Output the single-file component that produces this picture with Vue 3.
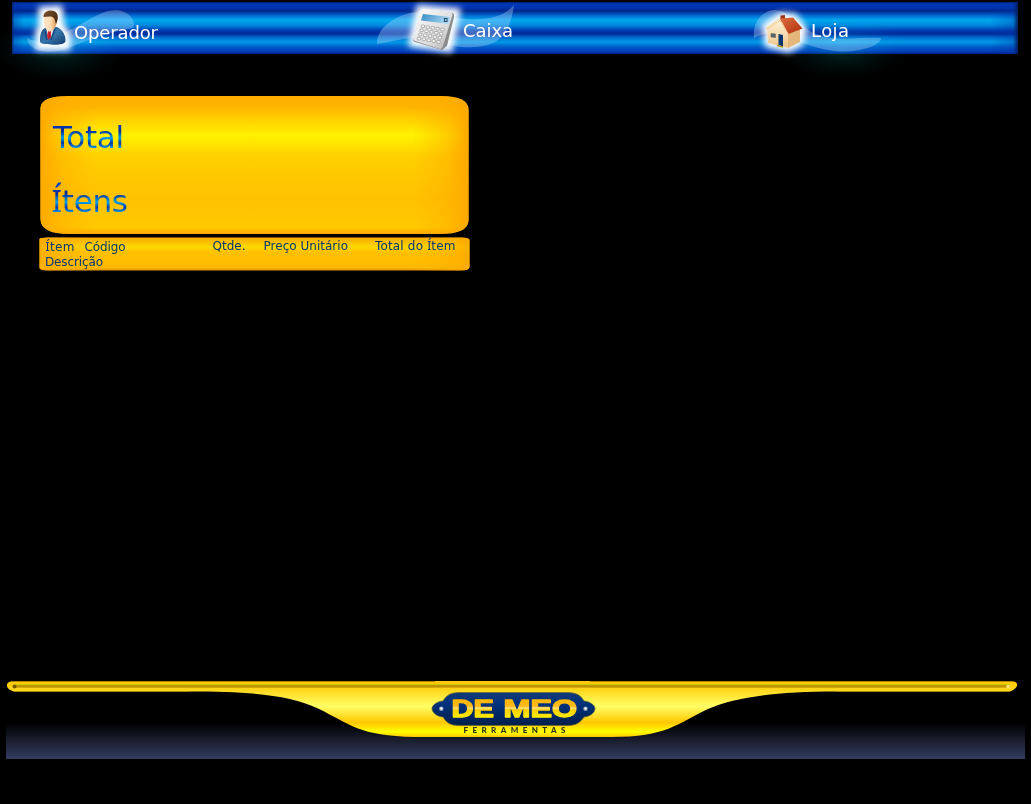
<script setup>
const keys = []
for (let r = 0; r < 4; r++) {
  for (let c = 0; c < 5; c++) {
    keys.push({ x: 421.3 + c * 4.9 - r * 1.3, y: 25 + r * 4.1 + c * 0.8 })
  }
}
</script>

<template>
  <main class="screen">
    <header class="topbar">
      <svg class="station" width="344" height="84" viewBox="0 0 344 84">
        <defs>
          <filter id="glow" x="-50%" y="-50%" width="200%" height="200%"><feGaussianBlur stdDeviation="3" /></filter>
          <radialGradient id="halo"><stop offset="0" stop-color="#007868" stop-opacity=".36" /><stop offset="1" stop-color="#003b35" stop-opacity="0" /></radialGradient>
          <linearGradient id="suit" x1="0" y1="0" x2="1" y2="1"><stop offset="0" stop-color="#1f5284" /><stop offset=".5" stop-color="#3474ab" /><stop offset="1" stop-color="#123b68" /></linearGradient>
          <linearGradient id="skin" x1="0" x2="1"><stop offset="0" stop-color="#ffe6c8" /><stop offset=".5" stop-color="#ffdcb4" /><stop offset="1" stop-color="#d99253" /></linearGradient>
          <linearGradient id="hair" x1="0" y1="0" x2="1" y2="1"><stop offset="0" stop-color="#80552c" /><stop offset="1" stop-color="#34200e" /></linearGradient>
        </defs>
        <ellipse cx="60" cy="48" rx="68" ry="34" fill="url(#halo)" class="under" />
        <path class="swoosh" d="M27 38C40 46 60 35 76 27C94 17 105 9 119 10.500C129 12 137 21 133 28C112 31 86 41 68 48C50 55 28 52 27 38Z" />
        <path d="M43 11L58 10L60 28L66 34L66 46L40 46L40 32L43 28Z" fill="#fff" stroke="#fff" stroke-width="9" filter="url(#glow)" />
        <path d="M40 42C40 34 41 29 47 27L57 27C62 29 66 35 65.500 41C65 45 56 45 51 44.500C46 44 42 44.500 40 42Z" fill="url(#suit)" />
        <path d="M46.500 29L54 28L51 37L48 39Z" fill="#e9edf2" />
        <path d="M48 31L51 31L51 37L48.500 40L47 36Z" fill="#c92330" />
        <path d="M45 31L47 40M55 29L51 40" stroke="#123d69" stroke-width="1" fill="none" />
        <path d="M44 18C45 13 48 12 52 13C56 14 57.500 19 56.500 24C55 29 51 33 48 31C45 29 43.500 24 44 18Z" fill="url(#skin)" />
        <path d="M43.500 17C43.500 13 46 11 50 10.500C56 10 59 14 57.500 20L56 24L54.500 19C52 15 48 17 43.500 17Z" fill="url(#hair)" />
        <text x="74" y="39" textLength="84" class="bar-label">Operador</text>
      </svg>
      <svg class="station" width="343" height="84" viewBox="344 0 343 84">
        <defs>
          <linearGradient id="case" x1="0" y1="0" x2="1" y2="1"><stop offset="0" stop-color="#fff" /><stop offset=".65" stop-color="#dadada" /><stop offset="1" stop-color="#aaa" /></linearGradient>
          <linearGradient id="display" x1="0" y1="0" x2="1" y2=".3"><stop offset="0" stop-color="#358bc6" /><stop offset="1" stop-color="#a9d5f0" /></linearGradient>
        </defs>
        <path class="swoosh" d="M377 44C376 32 389 18 410 13C435 10 448 18 468 19C488 20 504 17 514 5C512 22 506 37 493 43C474 51 449 47 432 39C410 35 394 42 377 44Z" />
        <path d="M421 10L455 13L448 47L414 42Z" fill="#fff" stroke="#fff" stroke-width="10" filter="url(#glow)" />
        <path d="M423 10L453 13Q454.500 14 454 17L447 46L442 50L415 42Q412.500 41 413.500 39L421 12Z" fill="#8b8b8b" />
        <path d="M423 9L451 12.500Q453 13 452.500 15L443 46Q442 49.500 440 49L415 41Q413 40 413.500 38L421 11Z" fill="url(#case)" />
        <path d="M423 14L450.500 17L448.500 24L421 20.500Z" fill="url(#display)" />
        <rect x="444.500" y="18.500" width="2.500" height="3" fill="none" stroke="#234760" />
        <g fill="#fff" stroke="#999" stroke-width=".8">
          <rect v-for="(k, i) in keys" :key="i" :x="k.x" :y="k.y" width="3.200" height="2.600" rx=".3" />
        </g>
        <text x="463" y="37" textLength="50" class="bar-label">Caixa</text>
      </svg>
      <svg class="station" width="344" height="84" viewBox="687 0 344 84">
        <defs>
          <linearGradient id="roof" x1="0" y1="0" x2="1" y2="1"><stop offset="0" stop-color="#df6d3f" /><stop offset="1" stop-color="#ad2e0c" /></linearGradient>
          <linearGradient id="wall" x1="0" y1="0" x2="0" y2="1"><stop offset="0" stop-color="#fff3d8" /><stop offset="1" stop-color="#ebc58c" /></linearGradient>
        </defs>
        <ellipse cx="842" cy="48" rx="66" ry="32" fill="url(#halo)" class="under" />
        <path class="swoosh" d="M754 38C752 22 763 10 775 10C793 11 804 32 821 36C840 41 860 37 881 38C881 46 859 52 840 51.500C819 50 801 43 786 36C774 31 764 33 754 38Z" />
        <path d="M766 26L781 16L794 17L803 29L800 43L788 49L768 44Z" fill="#fff" stroke="#fff" stroke-width="7" filter="url(#glow)" />
        <path d="M780.500 15.500L785 15L785 21L780.500 22Z" fill="#9b3319" />
        <path d="M767 28L780 19L788 32L788 48L768 43Z" fill="url(#wall)" />
        <path d="M788 32L800 29L800 42L788 48Z" fill="#e4b67c" />
        <path d="M780 18.500L793 17.500L802.500 28.500L788.500 34Z" fill="url(#roof)" />
        <path d="M780 18.500L766 28.500L767 29.500L780 20.500L788 34" fill="none" stroke="#f2cc98" stroke-width="1" />
        <path d="M778.500 34L783 35L783 46.500L778.500 45Z" fill="#083771" />
        <path d="M771 33.500L775.500 34L775.500 37.500L771 37Z" fill="#4d6577" stroke="#7e6b50" stroke-width=".7" />
        <path d="M777 45.500L783 47" stroke="#a99719" stroke-width="1.500" />
        <text x="811" y="37" textLength="38" class="bar-label">Loja</text>
      </svg>
    </header>

    <section class="summary">
      <svg width="429" height="139" viewBox="40 96 429 139">
        <defs>
          <linearGradient id="gold" x1="0" y1="0" x2="0" y2="1">
            <stop offset="0" stop-color="#ffae00" /><stop offset=".08" stop-color="#ffb400" /><stop offset=".285" stop-color="#fff200" /><stop offset=".44" stop-color="#ffd000" /><stop offset=".74" stop-color="#ffc100" /><stop offset=".95" stop-color="#ffca00" /><stop offset="1" stop-color="#ffa800" />
          </linearGradient>
          <linearGradient id="shade" x1="0" x2="1">
            <stop offset="0" stop-color="#ffa900" /><stop offset=".05" stop-color="#ffac00" stop-opacity=".5" /><stop offset=".13" stop-color="#ffb000" stop-opacity="0" /><stop offset=".87" stop-color="#ffb000" stop-opacity="0" /><stop offset=".95" stop-color="#ffac00" stop-opacity=".5" /><stop offset="1" stop-color="#ffa800" />
          </linearGradient>
          <linearGradient id="inkTotal" gradientUnits="userSpaceOnUse" x1="0" y1="125" x2="0" y2="149"><stop offset="0" stop-color="#0037bd" /><stop offset=".25" stop-color="#002ca0" /><stop offset=".54" stop-color="#00a0e8" /><stop offset=".75" stop-color="#0635a5" /><stop offset="1" stop-color="#00aaf3" /></linearGradient>
          <linearGradient id="inkItems" gradientUnits="userSpaceOnUse" x1="0" y1="182" x2="0" y2="213"><stop offset="0" stop-color="#004ad2" /><stop offset=".38" stop-color="#002b98" /><stop offset=".65" stop-color="#00a4ec" /><stop offset=".82" stop-color="#0638a9" /><stop offset="1" stop-color="#00a4f0" /></linearGradient>
          <path id="plate" d="M40.500 108Q41 96 68 96L441 96Q468.500 96 468.500 110L468.500 220Q468.500 234 439 234L69 234Q41 234 40.500 219Z" />
        </defs>
        <use href="#plate" fill="url(#gold)" />
        <use href="#plate" fill="url(#shade)" />
        <text x="53" y="148" textLength="71" class="headline" fill="url(#inkTotal)">Total</text>
        <text x="51.500" y="212" textLength="76.500" class="headline" fill="url(#inkItems)"><tspan class="serif-cap">Í</tspan>tens</text>
      </svg>
    </section>

    <section class="columns">
      <svg width="431" height="34" viewBox="39 237 431 34">
        <defs>
          <linearGradient id="strip" x1="0" y1="0" x2="0" y2="1"><stop offset="0" stop-color="#f7a900" /><stop offset=".29" stop-color="#ffd800" /><stop offset=".45" stop-color="#ffc000" /><stop offset=".92" stop-color="#ffb900" /><stop offset="1" stop-color="#d99000" /></linearGradient>
          <path id="stripShape" d="M39.500 239Q40 237.500 48 237.500L461 237.500Q469.500 237.500 469.500 240L469.500 267Q469.500 270.500 460 270.500L48 270.500Q40 270.500 39.500 268Z" />
        </defs>
        <use href="#stripShape" fill="url(#strip)" />
        <use href="#stripShape" fill="url(#shade)" opacity=".8" />
        <g class="column-label">
          <text x="45.500" y="251" textLength="29"><tspan class="serif-cap">Í</tspan>tem</text>
          <text x="84.500" y="251" textLength="41">Código</text>
          <text x="45" y="266" textLength="58">Descrição</text>
          <text x="212.500" y="250" textLength="33">Qtde.</text>
          <text x="263.500" y="250" textLength="84.500">Preço Unitário</text>
          <text x="375" y="250" textLength="80.500">Total do <tspan class="serif-cap">Í</tspan>tem</text>
        </g>
      </svg>
    </section>

    <footer class="brand">
      <svg width="1031" height="85" viewBox="0 675 1031 85">
        <defs>
          <linearGradient id="floor" x1="0" y1="0" x2="0" y2="1"><stop offset="0" stop-color="#000" /><stop offset="1" stop-color="#343d60" /></linearGradient>
          <linearGradient id="ribbon" gradientUnits="userSpaceOnUse" x1="0" y1="681" x2="0" y2="737">
            <stop offset="0" stop-color="#ffc400" /><stop offset=".16" stop-color="#ffd71d" /><stop offset=".45" stop-color="#ffff66" /><stop offset=".74" stop-color="#ffc700" /><stop offset=".91" stop-color="#ffff00" /><stop offset="1" stop-color="#ffc800" />
          </linearGradient>
          <linearGradient id="navy" x1="0" y1="0" x2="0" y2="1"><stop offset="0" stop-color="#123b77" /><stop offset=".35" stop-color="#00327c" /><stop offset="1" stop-color="#001e4b" /></linearGradient>
          <linearGradient id="letter" gradientUnits="userSpaceOnUse" x1="0" y1="699" x2="0" y2="718"><stop offset="0" stop-color="#ffb800" /><stop offset=".38" stop-color="#ffb91c" /><stop offset=".48" stop-color="#ffe27c" /><stop offset=".58" stop-color="#ffd000" /><stop offset="1" stop-color="#fff000" /></linearGradient>
        </defs>
        <rect x="6" y="723" width="1019" height="36" fill="url(#floor)" />
        <path d="M11 681.500L1013 681.500C1019 682 1019 688 1010 691.500L836 691.500C776 691.500 736 697 708 709C676 724 667 737 611 737L415 737C359 736 350 724 318 708.500C290 695 250 691.500 190 691.500L15 691.500C5 690 5 682 11 681.500Z" fill="url(#ribbon)" />
        <path d="M11 681.500H1013" stroke="#a98900" />
        <path d="M13 691.500H190M836 691.500H1010" stroke="#b59405" stroke-width=".7" />
        <path d="M15 684.500H1010" stroke="#d2ca00" />
        <path d="M14 686H1009" stroke="#bc9405" stroke-width="2" />
        <path d="M14 687.500H1009" stroke="#d8aa08" />
        <circle cx="14.500" cy="686.500" r="2" fill="#765900" />
        <circle cx="1008" cy="686.500" r="1.700" fill="#ffe477" />
        <path d="M435 681.500H590" stroke="#ffcd00" />
        <path d="M459 692.500H568C578 693 581 696 584 701C589 701 595 705 595 708.500C595 713 589 717 584 717C580 723 576 725.500 567 725.500H459C450 725.500 446 722 443 717C438 717 432 713 432 708.500C432 705 438 701 443 701C446 696 450 692.500 459 692.500Z" fill="url(#navy)" stroke="#65652c" stroke-width=".7" />
        <circle cx="441.300" cy="708.800" r="2.300" fill="#8799b4" /><circle cx="441.300" cy="708.500" r="1.200" fill="#fff" />
        <circle cx="585.500" cy="708.800" r="2.300" fill="#8799b4" /><circle cx="585.500" cy="708.500" r="1.200" fill="#fff" />
        <text x="451.500" y="717" textLength="42.500" lengthAdjust="spacingAndGlyphs" class="logo-text">DE</text>
        <text x="503.500" y="717" textLength="73.500" lengthAdjust="spacingAndGlyphs" class="logo-text">MEO</text>
        <text x="463.500" y="733" textLength="102" class="tagline">FERRAMENTAS</text>
      </svg>
    </footer>
  </main>
</template>

<style>
body { margin: 0; background: #000; }
</style>

<style scoped>
.screen { width: 1031px; height: 804px; overflow: hidden; background: #000; display: flex; flex-direction: column; align-items: flex-start; }
svg { display: block; }
.topbar {
  width: 1031px; height: 84px; display: flex; flex: none;
  background:
    linear-gradient(90deg, #002260 0, #002a9966 2px, transparent 12px, transparent 978px, #0034a455 1001px, #001e60 1006px) 12px 3px / 1006px 51px no-repeat,
    linear-gradient(180deg, #001f66 0, #0038b8 2px, #0032ae 6px, #00268c 9px, #0063cc 13px, #00a7ef 18px, #008be0 23px, #0036ad 29px, #002a9b 32px, #0066cb 35px, #009be7 40px, #005bc9 45px, #0039b6 50px, #001f70 52px) 12px 2px / 1006px 52px no-repeat;
}
.station { flex: none; }
.under { mix-blend-mode: screen; }
.swoosh { fill: #b9dcff; fill-opacity: .34; }
.bar-label { font: 18px "DejaVu Sans", sans-serif; fill: #fff; }
.summary { padding-left: 40px; margin-top: 12px; height: 139px; }
.headline { font: 31px "DejaVu Sans", sans-serif; }
.serif-cap { font-family: "Noto Sans", sans-serif; }
.columns { padding-left: 39px; margin-top: 2px; height: 34px; }
.column-label { font: 12px "DejaVu Sans", sans-serif; fill: #063675; }
.brand { margin-top: 404px; width: 1031px; height: 85px; }
.logo-text { font: bold 24px "Liberation Sans", sans-serif; fill: url(#letter); stroke: url(#letter); stroke-width: 1.3; stroke-linejoin: round; }
.tagline { font: 900 8px Lato, sans-serif; fill: #27351a; }
</style>
